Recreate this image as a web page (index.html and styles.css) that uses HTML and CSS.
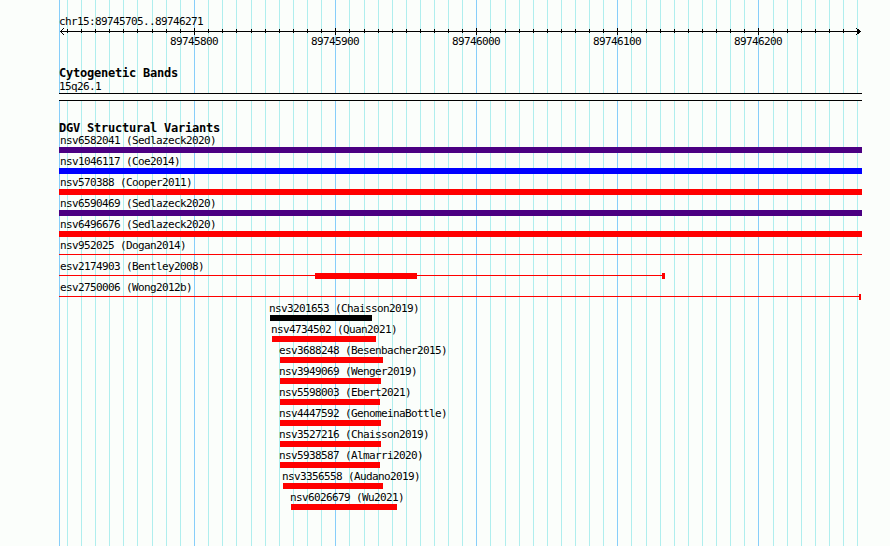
FILE: index.html
```html
<!doctype html>
<html lang="en">
  <head>
    <meta charset="utf-8">
    <title>chr15:89745705..89746271</title>
    <link rel="stylesheet" href="styles.css">
  </head>
  <body>
    <div class="panel">

      <!-- grid: a line every 10 bp, darker every 100 bp -->
      <svg class="grid" width="890" height="546">
        <path class="grid-minor" d="M67.5 0V546M81.5 0V546M95.5 0V546M109.5 0V546M123.5 0V546M137.5 0V546M152.5 0V546M166.5 0V546M180.5 0V546
          M208.5 0V546M222.5 0V546M236.5 0V546M251.5 0V546M265.5 0V546M279.5 0V546M293.5 0V546M307.5 0V546M321.5 0V546
          M349.5 0V546M364.5 0V546M378.5 0V546M392.5 0V546M406.5 0V546M420.5 0V546M434.5 0V546M448.5 0V546M462.5 0V546
          M490.5 0V546M505.5 0V546M519.5 0V546M533.5 0V546M547.5 0V546M561.5 0V546M575.5 0V546M589.5 0V546M603.5 0V546
          M631.5 0V546M646.5 0V546M660.5 0V546M674.5 0V546M688.5 0V546M702.5 0V546M716.5 0V546M730.5 0V546M744.5 0V546
          M773.5 0V546M787.5 0V546M801.5 0V546M815.5 0V546M829.5 0V546M843.5 0V546M857.5 0V546"/>
        <path class="grid-major" d="M59.5 0V546M194.5 0V546M335.5 0V546M476.5 0V546M617.5 0V546M758.5 0V546"/>
      </svg>

      <section class="ruler">
        <div class="ruler-title">chr15:89745705..89746271</div>
        <svg class="ruler-scale" width="890" height="20">
          <path class="ruler-line" d="M60 3.5H861M64 0L60.5 3.5L64 7M856 0L860.5 3.5L856 7"/>
          <path class="ruler-line" d="M67.5 1V5M81.5 1V5M95.5 1V5M109.5 1V5M123.5 1V5M137.5 1V5M152.5 1V5M166.5 1V5M180.5 1V5
            M208.5 1V5M222.5 1V5M236.5 1V5M251.5 1V5M265.5 1V5M279.5 1V5M293.5 1V5M307.5 1V5M321.5 1V5
            M349.5 1V5M364.5 1V5M378.5 1V5M392.5 1V5M406.5 1V5M420.5 1V5M434.5 1V5M448.5 1V5M462.5 1V5
            M490.5 1V5M505.5 1V5M519.5 1V5M533.5 1V5M547.5 1V5M561.5 1V5M575.5 1V5M589.5 1V5M603.5 1V5
            M631.5 1V5M646.5 1V5M660.5 1V5M674.5 1V5M688.5 1V5M702.5 1V5M716.5 1V5M730.5 1V5M744.5 1V5
            M773.5 1V5M787.5 1V5M801.5 1V5M815.5 1V5M829.5 1V5M843.5 1V5M857.5 1V5
            M194.5 0V7M335.5 0V7M476.5 0V7M617.5 0V7M758.5 0V7"/>
          <text class="ruler-label" x="194" y="17">89745800</text>
          <text class="ruler-label" x="335" y="17">89745900</text>
          <text class="ruler-label" x="476" y="17">89746000</text>
          <text class="ruler-label" x="617" y="17">89746100</text>
          <text class="ruler-label" x="758" y="17">89746200</text>
        </svg>
      </section>

      <section class="track">
        <h2 class="track-title">Cytogenetic Bands</h2>
        <div class="band-label">15q26.1</div>
        <div class="band"></div>
      </section>

      <section class="track track-dgv">
        <h2 class="track-title">DGV Structural Variants</h2>
        <div class="lane">
          <div class="sv-row">
            <div class="sv-label" style="margin-left:1px">nsv6582041 (Sedlazeck2020)</div>
            <div class="sv-glyph"><div class="sv-part indigo" style="left:0;width:803px"></div></div>
          </div>
          <div class="sv-row">
            <div class="sv-label" style="margin-left:1px">nsv1046117 (Coe2014)</div>
            <div class="sv-glyph"><div class="sv-part blue" style="left:0;width:803px"></div></div>
          </div>
          <div class="sv-row">
            <div class="sv-label" style="margin-left:1px">nsv570388 (Cooper2011)</div>
            <div class="sv-glyph"><div class="sv-part red" style="left:0;width:803px"></div></div>
          </div>
          <div class="sv-row">
            <div class="sv-label" style="margin-left:1px">nsv6590469 (Sedlazeck2020)</div>
            <div class="sv-glyph"><div class="sv-part indigo" style="left:0;width:803px"></div></div>
          </div>
          <div class="sv-row">
            <div class="sv-label" style="margin-left:1px">nsv6496676 (Sedlazeck2020)</div>
            <div class="sv-glyph"><div class="sv-part red" style="left:0;width:803px"></div></div>
          </div>
          <div class="sv-row">
            <div class="sv-label" style="margin-left:1px">nsv952025 (Dogan2014)</div>
            <div class="sv-glyph"><div class="sv-line red" style="left:0;width:803px"></div></div>
          </div>
          <div class="sv-row">
            <div class="sv-label" style="margin-left:1px">esv2174903 (Bentley2008)</div>
            <div class="sv-glyph">
              <div class="sv-line red" style="left:0;width:606px"></div>
              <div class="sv-part red" style="left:256px;width:102px"></div>
              <div class="sv-part red" style="left:603px;width:3px"></div>
            </div>
          </div>
          <div class="sv-row">
            <div class="sv-label" style="margin-left:1px">esv2750006 (Wong2012b)</div>
            <div class="sv-glyph">
              <div class="sv-line red" style="left:0;width:802px"></div>
              <div class="sv-part red" style="left:800px;width:2px"></div>
            </div>
          </div>
          <div class="sv-row">
            <div class="sv-label" style="margin-left:210px">nsv3201653 (Chaisson2019)</div>
            <div class="sv-glyph"><div class="sv-part black" style="left:211px;width:102px"></div></div>
          </div>
          <div class="sv-row">
            <div class="sv-label" style="margin-left:212px">nsv4734502 (Quan2021)</div>
            <div class="sv-glyph"><div class="sv-part red" style="left:213px;width:104px"></div></div>
          </div>
          <div class="sv-row">
            <div class="sv-label" style="margin-left:220px">esv3688248 (Besenbacher2015)</div>
            <div class="sv-glyph"><div class="sv-part red" style="left:221px;width:103px"></div></div>
          </div>
          <div class="sv-row">
            <div class="sv-label" style="margin-left:220px">nsv3949069 (Wenger2019)</div>
            <div class="sv-glyph"><div class="sv-part red" style="left:221px;width:101px"></div></div>
          </div>
          <div class="sv-row">
            <div class="sv-label" style="margin-left:220px">nsv5598003 (Ebert2021)</div>
            <div class="sv-glyph"><div class="sv-part red" style="left:221px;width:100px"></div></div>
          </div>
          <div class="sv-row">
            <div class="sv-label" style="margin-left:220px">nsv4447592 (GenomeinaBottle)</div>
            <div class="sv-glyph"><div class="sv-part red" style="left:221px;width:101px"></div></div>
          </div>
          <div class="sv-row">
            <div class="sv-label" style="margin-left:220px">nsv3527216 (Chaisson2019)</div>
            <div class="sv-glyph"><div class="sv-part red" style="left:221px;width:101px"></div></div>
          </div>
          <div class="sv-row">
            <div class="sv-label" style="margin-left:220px">nsv5938587 (Almarri2020)</div>
            <div class="sv-glyph"><div class="sv-part red" style="left:221px;width:100px"></div></div>
          </div>
          <div class="sv-row">
            <div class="sv-label" style="margin-left:223px">nsv3356558 (Audano2019)</div>
            <div class="sv-glyph"><div class="sv-part red" style="left:224px;width:100px"></div></div>
          </div>
          <div class="sv-row">
            <div class="sv-label" style="margin-left:231px">nsv6026679 (Wu2021)</div>
            <div class="sv-glyph"><div class="sv-part red" style="left:232px;width:106px"></div></div>
          </div>
        </div>
      </section>

    </div>
  </body>
</html>
```

FILE: styles.css
```css
* {
  box-sizing: border-box;
}

body {
  margin: 0;
  background: #fbfefb;
  color: #000;
  font-family: 'DejaVu Sans Mono', 'Liberation Mono', monospace;
  font-size: 11px;
  letter-spacing: -0.62px;
}

.panel {
  position: relative;
  width: 890px;
  height: 546px;
  overflow: hidden;
}

/* Grid sits under everything else */
.grid {
  position: absolute;
  top: 0;
  left: 0;
}
.grid path {
  fill: none;
  stroke-width: 1;
  shape-rendering: crispEdges;
}
.grid-minor {
  stroke: #afeeee;
}
.grid-major {
  stroke: #87cefa;
}

.ruler,
.track {
  position: relative;
}

/* Ruler */
.ruler {
  padding-top: 15px;
}
.ruler-title {
  padding-left: 59px;
  line-height: 13px;
}
.ruler-scale {
  display: block;
}
.ruler-line {
  fill: none;
  stroke: #000;
  stroke-width: 1;
  shape-rendering: crispEdges;
}
.ruler-label {
  font-family: 'DejaVu Sans Mono', monospace;
  font-size: 11px;
  letter-spacing: -0.62px;
  text-anchor: middle;
  fill: #000;
}

/* Tracks */
.track-title {
  margin: 19px 0 0;
  padding-left: 59px;
  font-size: 12px;
  font-weight: bold;
  letter-spacing: -0.22px;
  line-height: 13px;
}
.track-dgv .track-title {
  margin-top: 20px;
  line-height: 14px;
}

.band-label {
  padding-left: 59px;
  line-height: 13px;
}
.band {
  margin-left: 59px;
  width: 803px;
  height: 8px;
  border-top: 1px solid #000;
  border-bottom: 1px solid #000;
  background: #fbfefb;
}

/* Structural variant rows */
.lane {
  margin-left: 59px;
  width: 803px;
  overflow: hidden;
}
.sv-row {
  height: 21px;
}
.sv-label {
  line-height: 12px;
  white-space: nowrap;
}
.sv-glyph {
  position: relative;
  height: 6px;
}
.sv-part {
  position: absolute;
  top: 0;
  height: 6px;
}
.sv-line {
  position: absolute;
  top: 2px;
  height: 1px;
}

.indigo {
  background: #4b0082;
}
.blue {
  background: #0000ff;
}
.red {
  background: #ff0000;
}
.black {
  background: #000;
}
```
